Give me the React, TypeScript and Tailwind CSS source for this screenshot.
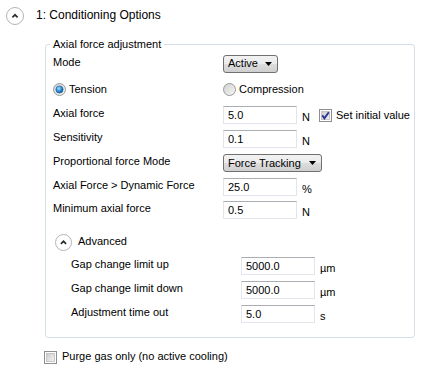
import React from 'react'

const font = { fontFamily: '"Liberation Sans", Arial, sans-serif' }

const Chevron = ({ size }: { size: number }) => {
  const c = size / 2
  return (
    <svg width={size} height={size} viewBox={`0 0 ${size} ${size}`} className="shrink-0">
      <circle cx={c} cy={c} r={c - 0.5} fill="#ffffff" stroke="#b4b4b4" />
      <path d={`M${c - 2.6} ${c + 1.3} L${c} ${c - 1.2} L${c + 2.6} ${c + 1.3}`} fill="none" stroke="#2e2e2e" strokeWidth="1.7" />
    </svg>
  )
}

const Radio = ({ checked }: { checked?: boolean }) => (
  <svg width="13" height="13" viewBox="0 0 13 13" className="shrink-0">
    <defs>
      <linearGradient id="rg-off" x1="0" y1="0" x2="1" y2="1">
        <stop offset="0" stopColor="#cfcfcf" />
        <stop offset="1" stopColor="#f7f7f7" />
      </linearGradient>
      <radialGradient id="rg-on" cx="0.4" cy="0.35" r="0.7">
        <stop offset="0" stopColor="#a8e0ff" />
        <stop offset="0.5" stopColor="#2f95dc" />
        <stop offset="1" stopColor="#0e4f8e" />
      </radialGradient>
    </defs>
    <circle cx="6.5" cy="6.5" r="6" fill="url(#rg-off)" stroke="#9a9a9a" />
    {checked && <circle cx="6.5" cy="6.5" r="3.6" fill="url(#rg-on)" stroke="#1d5a92" strokeWidth="0.6" />}
  </svg>
)

const Check = ({ checked }: { checked?: boolean }) => (
  <svg width="13" height="13" viewBox="0 0 13 13" className="shrink-0">
    <defs>
      <linearGradient id="cb" x1="0" y1="0" x2="1" y2="1">
        <stop offset="0" stopColor="#cbcbcb" />
        <stop offset="1" stopColor="#f5f5f5" />
      </linearGradient>
    </defs>
    <rect x="0.5" y="0.5" width="12" height="12" fill="#ffffff" stroke="#8e8f8f" />
    <rect x="2.5" y="2.5" width="8" height="8" fill="url(#cb)" stroke="#bcbcbc" strokeWidth="0.8" />
    {checked && <path d="M3.3 6.4 L5.4 9.3 L9.8 3.2" fill="none" stroke="#2c3591" strokeWidth="1.9" />}
  </svg>
)

const Input = ({ value }: { value: string }) => (
  <input
    readOnly
    value={value}
    className="w-[74px] h-[18px] shrink-0 border border-[#e2e6ec] border-t-[#abadb3] bg-white pl-[4px] text-[11px] text-black outline-none"
    style={font}
  />
)

const Arrow = () => (
  <svg width="7" height="4" viewBox="0 0 7 4" className="shrink-0">
    <path d="M0 0 H7 L3.5 4 Z" fill="#000" />
  </svg>
)

const Drop = ({ value, w }: { value: string; w: string }) => (
  <div className={`${w} flex h-[18px] shrink-0 items-center justify-between rounded-[3px] border border-[#707070] bg-[linear-gradient(#f2f2f2_0%,#ebebeb_50%,#dddddd_50%,#cfcfcf_100%)] pl-[4px] pr-[5px]`}>
    <span className="whitespace-nowrap">{value}</span>
    <Arrow />
  </div>
)

const Row = ({ label, h, children }: { label: string; h: string; children: React.ReactNode }) => (
  <div className={`flex items-center whitespace-nowrap ${h}`}>
    <span className="w-[170px] shrink-0 mb-[3px]">{label}</span>
    {children}
  </div>
)

const Unit = ({ text }: { text: string }) => <span className="ml-[5px] mt-[5px] w-[17px] shrink-0">{text}</span>

export default function App() {
  return (
    <div className="w-[445px] h-[379px] bg-white text-[11px] text-black leading-[13px]" style={font}>
      <div className="flex h-[31px] items-center gap-[12px] pl-[6px]">
        <Chevron size={18} />
        <span className="text-[12px]">1: Conditioning Options</span>
      </div>

      <fieldset className="ml-[45px] mt-[7px] w-[369px] rounded-[3px] border border-[#d5dfe5] pl-[4px] pr-[4px] pb-[11px]">
        <legend className="px-[3px] leading-[13px]">Axial force adjustment</legend>
        <div className="pl-[3px]">
          <Row label="Mode" h="h-[25px]">
            <Drop value="Active" w="w-[55px]" />
          </Row>
          <div className="flex h-[27px] items-center whitespace-nowrap">
            <div className="flex w-[170px] shrink-0 items-center gap-[3px]">
              <Radio checked />
              <span>Tension</span>
            </div>
            <div className="flex items-center gap-[3px]">
              <Radio />
              <span>Compression</span>
            </div>
          </div>
          <Row label="Axial force" h="h-[24px]">
            <Input value="5.0" />
            <Unit text="N" />
            <Check checked />
            <span className="ml-[4px] whitespace-nowrap">Set initial value</span>
          </Row>
          <Row label="Sensitivity" h="h-[24px]">
            <Input value="0.1" />
            <Unit text="N" />
          </Row>
          <Row label="Proportional force Mode" h="h-[24px]">
            <Drop value="Force Tracking" w="w-[99px]" />
          </Row>
          <Row label="Axial Force > Dynamic Force" h="h-[23px]">
            <Input value="25.0" />
            <Unit text="%" />
          </Row>
          <Row label="Minimum axial force" h="h-[24px]">
            <Input value="0.5" />
            <Unit text="N" />
          </Row>

          <div className="mt-[8px] flex h-[24px] items-center gap-[6px] pl-[2px]">
            <Chevron size={17} />
            <span className="mb-[1px]">Advanced</span>
          </div>
          <div className="pl-[18px]">
            <Row label="Gap change limit up" h="h-[24px]">
              <Input value="5000.0" />
              <Unit text="µm" />
            </Row>
            <Row label="Gap change limit down" h="h-[24px]">
              <Input value="5000.0" />
              <Unit text="µm" />
            </Row>
            <Row label="Adjustment time out" h="h-[24px]">
              <Input value="5.0" />
              <Unit text="s" />
            </Row>
          </div>
        </div>
      </fieldset>

      <div className="mt-[7px] flex h-[24px] items-center gap-[5px] pl-[44px] whitespace-nowrap">
        <Check />
        <span className="mb-[1px]">Purge gas only (no active cooling)</span>
      </div>
    </div>
  )
}
